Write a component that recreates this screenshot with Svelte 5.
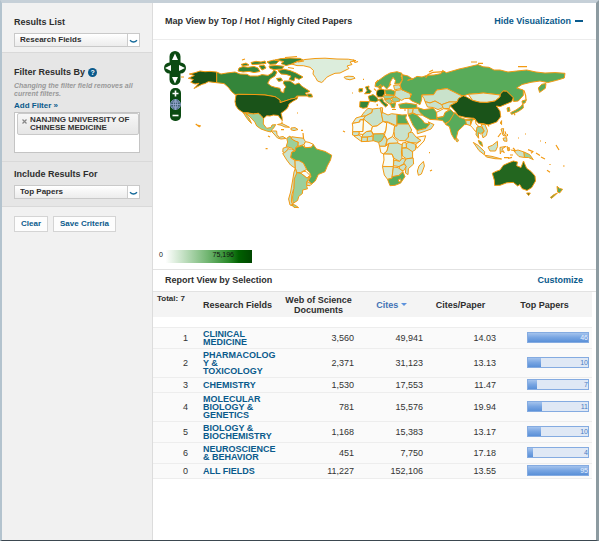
<script>
  const rows = [
    { n: 1, name: 'CLINICAL MEDICINE', docs: '3,560', cites: '49,941', cpp: '14.03', top: 46, fill: 100 },
    { n: 2, name: 'PHARMACOLOGY & TOXICOLOGY', docs: '2,371', cites: '31,123', cpp: '13.13', top: 10, fill: 21 },
    { n: 3, name: 'CHEMISTRY', docs: '1,530', cites: '17,553', cpp: '11.47', top: 7, fill: 15 },
    { n: 4, name: 'MOLECULAR BIOLOGY & GENETICS', docs: '781', cites: '15,576', cpp: '19.94', top: 11, fill: 24 },
    { n: 5, name: 'BIOLOGY & BIOCHEMISTRY', docs: '1,168', cites: '15,383', cpp: '13.17', top: 10, fill: 21 },
    { n: 6, name: 'NEUROSCIENCE & BEHAVIOR', docs: '451', cites: '7,750', cpp: '17.18', top: 4, fill: 9 },
    { n: 0, name: 'ALL FIELDS', docs: '11,227', cites: '152,106', cpp: '13.55', top: 95, fill: 100 }
  ];

  const C = {
    darkest: '#1a5319', dark: '#23661f', deep: '#34853a', green: '#58ab5a',
    mid: '#9bcf9b', light: '#c9e2cb', pale: '#dceddc', white: '#f8fcf6'
  };

  const land = [
    // North America
    [C.darkest, 'M216.7 72 210 71.4 205 71.7 200 71 195 72.7 189.3 74 194.3 75.5 188.3 78.3 193.3 79.5 190.7 82.2 195 84 199 83.3 194 88.5 202 84.3 205 83.5 208.3 81.7 216.7 82.7Z'],
    [C.deep, 'M216.7 72 221 74 226.7 73 235 72 240 74 247 74.3 250 76 258 76 262 74.6 268 75.4 272 73 274 70 277 72 275 76 270 79 267.7 83.3 271 86 275 87.3 280 88.3 281 91.7 283.7 92.7 284.2 89 286 87 283.3 83.3 284 81 290 81 295 84.5 299 83 301.5 86 305 88.3 310 91.4 305 93.3 309 96 302 96 296.7 96 295 98.3 291 99 285 101 280 102.7 280 100 275 96.7 265 95 255 94.5 238.3 94.3 235 94.5 231.7 91.7 228.3 87.3 224 83.6 216.7 82.7Z'],
    [C.darkest, 'M236 95 238.3 94.4 255 94.5 265 95 275 96.7 280 100 280 102.7 285 101 291 99 295 98.3 298 96.4 297 99 293.3 101 289 104 288 107 286.7 109 281 113.3 282 117 282.3 120.7 280 118 278.3 115.5 273.3 115 270 116 266.7 115.7 263.5 118.6 261 115.6 258.3 113.3 253.3 114 248 112.8 243.3 112.7 238.3 109.3 236 106 235 101.7Z'],
    [C.mid, 'M246 113 253.3 114 258.3 113.3 261 115.6 263.5 118.6 263.3 124 266.7 128.3 271 127.5 272 125 275.7 124.6 274 127.7 272 129.5 271 132 266.7 131 261 129 256.7 126 254.8 122 251 118Z'],
    [C.mid, 'M243.5 113 246 117 249 121 251.5 123.4 249 118 245.8 113.5Z'],
    [C.light, 'M271 131 276.6 131 277 134.5 279 137.3 283 136.5 286 138.5 281 139 277.5 138 274 134Z'],
    [C.light, 'M277.5 124.5 282 123.5 286 125.5 289.5 127.3 285 127 281 125.2Z'],
    [C.light, 'M291 128 295 127.6 298 129.5 294 130.6 291 129.8Z'],
    [C.deep, 'M239 68 243 66.6 248 67.3 254 66.4 258 68 260 71.5 254 72.6 249 71.4 243 72 238 71Z'],
    [C.deep, 'M241 64.5 246 63 249 65 243 66Z'],
    [C.deep, 'M251 62.5 256 61.3 261 62 265 61 266 63.4 258 64.3 252 64.6Z'],
    [C.deep, 'M259 66 264 65 266 68 262 70Z'],
    [C.deep, 'M267 61.8 274 60 279 61 276 64 270 64.4Z'],
    [C.deep, 'M269 66 276 65.4 284 66.3 282 69 274 69.6 270 68.4Z'],
    [C.deep, 'M278 70.6 284 69.2 290 70.6 296 73 303 77 299 79.4 295 77.5 294 81 289 79.4 291 76 286 74.4 281 74Z'],
    [C.deep, 'M275 60 281 58.6 290 58 300 58.4 303 60 297 61.4 292 64 286 65.6 281 63.5 284 61.5Z'],
    [C.deep, 'M276.5 78.5 281 78 282.5 80.5 278.6 81.4Z'],
    [C.deep, 'M307 94 311.5 94 312.5 97 308.4 97Z'],
    [C.pale, 'M291.7 64 298 61.5 305 59.5 315 58.5 325 58.2 337 59 348.3 59.2 356 60.6 350 62 352 64.5 347 66 349 68.5 344 71 340 73 335 73.3 330 75.5 326.7 77.3 324 80.5 321.7 82.5 317.5 81 315.5 77.5 313 74 313.5 70.5 310 67.3 303.3 65.7 297 65.6Z'],
    [C.pale, 'M344 77.2 348 76.2 353.5 76.5 355 78.3 350 79.8 345.6 78.9Z'],
    // South America
    [C.mid, 'M286.7 138.3 290 136 291.6 139 296 141.4 298.3 142 298 146 296 147 295.2 151 291.5 148 286.2 146.6 287.6 142Z'],
    [C.light, 'M291.7 136.7 297 137.5 303.3 138.2 305.5 141.7 304 144.5 299.3 146 298 146 298.3 142 296 141.4 291.6 139Z'],
    [C.white, 'M305.5 141.7 309 142.4 313.3 144.3 311.5 147.3 305 147.7 304 144.5Z'],
    [C.green, 'M300 146.3 302.5 145.6 305 147.7 311.5 147.3 313.3 144.6 316.5 149 325 151.4 331.7 155.2 330.5 160 327.3 166 325 171.7 318.3 174.5 315.3 181 311.7 184 308.3 180.5 311 176.5 309.8 172.8 306.7 169.5 303.3 163 297 161 290.5 157.5 291.7 152 295 151 296 147.5Z'],
    [C.light, 'M283 148.3 286.5 147 288.5 149 284.8 152.5 282.8 152Z'],
    [C.light, 'M284.8 152.5 288.5 149 291.5 149 294.8 151 291.7 152 290.5 157.5 295 160.6 295.3 168.3 290.5 165 286.7 160 282.7 153.5Z'],
    [C.light, 'M295 160.6 299 160.6 303.3 163 306.7 169.5 302.7 171.4 300.7 172.5 297 172.6 295.3 168.3Z'],
    [C.white, 'M302.7 171.4 306 171.4 309.8 175.2 307 178.2 301.4 173.6Z'],
    [C.mid, 'M297 172.6 301.4 173.6 307 178.2 310.2 176.2 307 181.5 306.5 185.5 307.5 188.8 302.7 190 302.4 193.6 298.8 196.3 297.6 200.5 293 203.4 292.6 197 293.8 188.3 294 178.3Z'],
    [C.light, 'M307 181.5 311.7 184 310 185.7 306.8 185.4Z'],
    [C.light, 'M295.3 168.5 296.8 173 294.2 179 293.8 188.3 291.8 195 291.4 202 294 206.2 290 205 288.6 199 290.6 192 292.7 180 294 172Z'],
    [C.mid, 'M291.6 204.3 295 205 298.6 207.6 294 207.4Z'],
    // Africa
    [C.light, 'M368 108.4 372.5 109 372 112.5 365.5 116 361 116.5 364.3 112Z'],
    [C.pale, 'M361 116.5 365.5 116 365 119 360 119.8 359.8 122 352.3 123.5 356 118Z'],
    [C.light, 'M372.5 109 378.3 108.3 380.5 108.3 381.6 114 383 121.5 377 126 372.5 126.5 363.5 119 365.5 116 372 112.5Z'],
    [C.pale, 'M380.5 107.6 382.6 107.8 382.4 112.4 381.6 114Z'],
    [C.light, 'M382.4 112.4 388 115 391.5 113.7 397 114.3 397 126 388 122 383 121.5 381.6 114.5Z'],
    [C.green, 'M397 114.3 402 115 406.7 114.7 405.6 118 408.6 124 397 124Z'],
    [C.white, 'M352.3 123.5 359.8 122 360 119.8 363.5 120 363 131.5 352.6 131.8 352.8 127Z'],
    [C.white, 'M363.5 119 372.5 126.5 371.3 130.8 366.5 131.5 363 134.5 359 134 359 131.6 363 131.5Z'],
    [C.white, 'M377 126 383 121.5 386.8 123 386 130 383.5 133.8 373.5 134 371.3 130.8 372.5 126.5Z'],
    [C.white, 'M386.8 122 394.6 125.8 394 131.4 392.6 136.6 387.4 139.6 384.4 135 386 130Z'],
    [C.light, 'M397 124 408.6 124 411.7 130 408.5 135.6 408.4 139 405 140.8 399.5 140.6 394.6 137 394 131.4 394.6 126.2 397 126Z'],
    [C.light, 'M352.6 131.8 359 131.6 359 134 357 136.4 352.5 135Z'],
    [C.pale, 'M354 136 359 135 361.8 137 361.5 141.6 358 139Z'],
    [C.light, 'M361.8 137 367.5 137 367.3 141.4 361.5 141.6Z'],
    [C.light, 'M363 134.5 366.5 131.6 371.3 131.2 373 134.6 370.6 136.8 361.8 137Z'],
    [C.light, 'M367.5 137 373 136 373 140.8 367.3 141.5Z'],
    [C.mid, 'M373.5 134 383.5 133.8 384.4 136 381.4 141 378.6 142.4 373 140.6Z'],
    [C.light, 'M384.4 136 387 140 385.4 146.3 379.6 146.3 378.6 142.4 381.4 141Z'],
    [C.pale, 'M387.4 139.6 392.6 136.6 398 141.4 397.5 143.4 389 143.4 386 145Z'],
    [C.white, 'M379.6 146.3 385.4 146.3 388.5 144 387 151 383.6 154 380.8 152.5Z'],
    [C.light, 'M389 143.4 397.5 143 402.4 145 401.4 152 402 158.4 399.6 161.4 394 158.3 392 154.2 383.6 154 387 151Z'],
    [C.white, 'M383.6 154 392 154.2 393.5 158.3 393.4 166.6 382.5 166.4 384 160Z'],
    [C.light, 'M408.4 133 412 132 416 137 421 140.4 416.6 143 410 142.4 405 140.8 408.4 137Z'],
    [C.white, 'M416.7 137.3 425.7 135.8 424 141 417 148.3 415.7 144.3 421 140.4Z'],
    [C.light, 'M409 142.2 415.7 144.3 415.6 149.6 412 151.8 406.6 148 406 143.6Z'],
    [C.pale, 'M402.4 143 406 142.4 406.4 147.4 402 148.2Z'],
    [C.light, 'M402 148.2 407 148 412.6 151.8 412.6 158 406.4 158.8 402.4 156Z'],
    [C.light, 'M394 160 399.6 161.4 402 158.4 405.6 159 404.6 163.3 399 166.6 393.4 165.6Z'],
    [C.light, 'M406.4 158.8 413.2 158 413.6 164 408.4 168.6 408 174.6 405.4 173 406 166 403.7 163Z'],
    [C.light, 'M399 166.6 404.4 164 406 166.6 403.6 170.8 400.2 169.8Z'],
    [C.pale, 'M382.5 166.6 393.4 166.6 392 178.2 387.6 179.4 384.3 175Z'],
    [C.light, 'M393.4 167 398 167.6 403 171.4 399 175.4 392 177Z'],
    [C.green, 'M387.6 179.4 392 178.2 392.4 176.6 399 175.4 403 172 405 176.6 400.5 183.2 395 185.3 390 185.7Z'],
    [C.white, 'M398.2 180 400.4 178.8 401 181 399.2 182Z'],
    [C.pale, 'M423.4 161.4 424.4 166 421.4 174 418.4 175.3 417.4 171 419 166Z'],
    // Europe
    [C.green, 'M375 86.5 375.7 82.3 380 79.4 385 75.7 390 73 397 71.7 402 73.3 401 76 402.3 80 399.3 83.8 394.7 84 395.5 80.5 393 77.3 390.3 82 389.4 86 386.7 89 383.6 85.8 380 87.4Z'],
    [C.deep, 'M365.4 87 369 86 368.6 89 371.4 91 370 93.4 364.6 93.8 367 90.6Z'],
    [C.deep, 'M359 88.8 362.6 88.5 362.4 91.6 359 92Z'],
    [C.deep, 'M368.3 96.3 373 94.6 376.6 97 378.6 100.5 375.5 102 369.6 101Z'],
    [C.deep, 'M360 101.4 369.4 101.5 367 107.6 363 108.3 359.6 107Z'],
    [C.darkest, 'M377 90.4 381 89 384.6 90 384.6 94 382.7 97 377.7 97 376.4 94Z'],
    [C.green, 'M378.8 86 381 84.6 381.3 88.6 379 88.6Z'],
    [C.green, 'M384.6 90 391 89.7 395.4 91.4 394.4 95.2 386 94.5Z'],
    [C.deep, 'M378.4 99.4 382.6 98.6 383.6 101.6 388 105 385.6 107 380.5 102Z'],
    [C.mid, 'M383 95.2 394 95.5 393.5 98.5 384.5 98.8Z'],
    [C.mid, 'M384.5 99.6 390 98.6 392.6 102 389.6 104 386 101.6Z'],
    [C.mid, 'M391.5 97.6 398.6 96.6 400 101 393.5 102.3Z'],
    [C.green, 'M390.3 103.6 395.6 102.8 394.6 108 391.6 107.4Z'],
    [C.light, 'M393.6 85.4 399.5 84.8 401 88.5 394.6 89.8Z'],
    [C.light, 'M395.4 90.6 401.5 89.6 410 93.4 411 98.2 404.6 98.6 401.6 100.4 394.6 96Z'],
    // Russia and Asia
    [C.green, 'M402 74.6 408 76 412.6 79 407.6 80.3 413.3 78.5 417 76.4 422 77 426.7 75.4 434 75 441 73.6 442.6 70.4 446.4 72.7 453 70.8 459 69 465 67.7 472 66 478 64.6 483 66.8 489 67.3 494 70 500 70 508 72 516.7 71 526.7 70 536 72 545 73 555 72.6 565 73.3 564.3 78 556.7 80.3 547.7 82.6 540 81 531 82.3 522 84.5 516.7 88 523.3 90 523.3 95.4 518.3 101 513.6 101.5 513.3 97.7 506.7 91.3 503 91 500 95 492 94 483.3 93 478 93.6 468.3 94.3 463 96 458 94 453.3 91.7 447 88.6 436.7 90 433.6 94.7 421.7 95 421.7 99.6 420 104.6 412 101 409.4 99 411.6 94 401.7 89.7 400 85 402.4 80Z'],
    [C.green, 'M546 83.5 545.4 88.3 539.6 92.4 538.3 88 541.7 84.3Z'],
    [C.light, 'M421.7 95 433.6 94.7 436.7 90 447 88.6 453.3 91.7 460 95 463 96 458.6 98.4 457 102 449 102 441.7 104.7 435 101 430 103 425 101.6 424 98.6Z'],
    [C.light, 'M425 101.6 430 103 435 101 441.7 104.7 445.6 106.6 438 109.6 433.3 107.5 427.5 107Z'],
    [C.light, 'M441.7 104.7 449 102 457 102 450 105.6 449.6 108.4 443.6 108.7Z'],
    [C.pale, 'M468.3 94.3 478 93.6 483.3 93 492 94 500 95 500 97 495 101 487 102.4 480 102.3 472.6 100.4Z'],
    [C.darkest, 'M450 105.6 457 102 458.6 98.4 463.3 95.7 466.6 97 472.6 100.4 480 102.3 487 102.4 495 101 500 97 500.4 94 503.3 91 506.7 91.3 513.3 97.7 511.7 101.7 505 104.5 500 106.7 496.4 106 500 111 500.7 116.7 496.7 122 488.3 125 483 123.6 478.3 123.3 474 118.3 466 117.6 458.3 115.7 454.6 110.6Z'],
    [C.green, 'M398.7 104.4 406 103 416.7 104.6 417 108 408 108.5 400 108.3Z'],
    [C.light, 'M408 108.6 413.4 108.4 412.5 112.6 408 114.4Z'],
    [C.light, 'M413.4 108.4 418 108.4 422.6 115.3 416.7 114.6 412.5 112.6Z'],
    [C.green, 'M417.7 107.6 424 109.6 433.3 108.3 436.6 112.3 437 119.8 430 119.4 423.6 116 419.5 112Z'],
    [C.green, 'M408.3 115 412.5 113.3 416.7 115 422.4 120 424.4 123 429.8 124 426 128.4 417 130.6 413 125.3Z'],
    [C.light, 'M417 130.6 426 128.4 429.8 124 428 121.8 434 124.6 431 129 424 131.6 417.4 133.8Z'],
    [C.white, 'M436.6 112.3 443.6 108.7 449.6 109.4 445 112.6 443.6 116.6 437 117.6Z'],
    [C.green, 'M437 119.8 437.6 117.6 443.6 116.6 445 112.6 450.6 109.6 454.6 113.6 449.3 121.3 445 123.6 442.6 120.5Z'],
    [C.green, 'M449.3 121.3 454.6 112.6 459.6 117.3 466 119.5 474 118.4 470.6 124.3 464.6 124.6 458 131 456 139 454.6 139.6 451.4 134 449.4 126.6 445.5 124.5Z'],
    [C.light, 'M465.6 120.3 470.6 120.5 470.4 125.6 466.4 124.3Z'],
    [C.mid, 'M456.4 138 458.6 140 457.6 141.8 456 141Z'],
    [C.white, 'M472.4 120 475.4 119.3 476 124 478.6 126 475.6 131.6 472.4 127.6 470.4 125.6Z'],
    [C.mid, 'M477 127 481 126.4 484.3 131 480.5 134 478.4 132.5 478.6 138.3 476 134.6Z'],
    [C.light, 'M481 124.6 485 124.5 487.5 130.6 486.4 135.4 483 137.8 482 134.4 484.3 131Z'],
    [C.green, 'M478.3 140.3 481.6 142 482.6 146.4 479.5 144Z'],
    [C.light, 'M473.3 142.4 478 145.3 484.7 151.7 484.4 154.8 479 150.6Z'],
    [C.light, 'M485 155.3 492 156.4 501.6 159 495 158.7 486.4 157Z'],
    [C.light, 'M488 147 492.4 145.3 497.4 141.3 497.6 146.5 495.5 151 490 151Z'],
    [C.light, 'M500 147.4 506 146.4 502 149 504.4 152.6 501.4 151 500.3 154Z'],
    [C.light, 'M507 146.3 510 149.6 508 151Z'],
    [C.light, 'M514 151 518 150 524 152 524.5 157.5 519 156.6 516 153.4Z'],
    [C.mid, 'M524 152 529.6 154.6 533.3 159.6 528.4 157.5 524.5 157.5Z'],
    [C.light, 'M501 129 503.6 128.5 503.3 133 506.6 136.4 503 135.3Z'],
    [C.light, 'M503 138.3 506.6 137.6 507 141.3 504 141Z'],
    [C.green, 'M500.3 123 501.6 120.6 501.6 124.6Z'],
    [C.green, 'M507 108 509.4 107.3 510 111 507.6 111.6Z'],
    [C.green, 'M510.6 112.7 516 110 521 106.4 523 103.6 523.3 108 518.6 111.3 511.6 114.4Z'],
    [C.green, 'M522 101 526.5 99.6 525 103 522.4 103.4Z'],
    // Oceania
    [C.dark, 'M492.3 173.3 496 171.4 500 170 503.3 165.3 508.3 163 513.3 161 517.5 162 516.7 165.7 521 167.5 523.5 161 525 164.6 526.7 168.3 531 171.4 535 176 535.5 181 531.7 187.6 527 190.5 522 188.6 519.8 184.6 517.7 186 513.3 182.4 506.7 182.8 500 185.3 494.6 185.4 494.4 180.4Z'],
    [C.dark, 'M526.6 193 530.3 193 528.6 195.6Z'],
    [C.green, 'M557 186.3 559.6 188.4 562.6 189.3 559.6 193 557.6 192Z'],
    [C.green, 'M557.4 193 554.6 195.8 551.3 198.4 550.4 197.3 554 194.6Z']
  ];

  // Archipelagos and coast fragments too small to carry a fill
  const specks = 'M181 77h3M197 125l4 1M195.7 124l4 3M242 60l3-1M285 57.5l12-1M298 62l6-1M288 67.5l6 1M353 59.5l2 3 3-1M301 130.3h2M303 133l.6 6M281 129.6h3M282 121.5v2M268 136l2 1M343 131l2 1M265.6 148.6h2M297 113h1M425.6 78 428 74.6 433 72.3 444 71.6M429 72l4-2M471 62h6M478 63.4h5M518 66.6h9M524 90.4l1.6 5 .4 4M514 113.3l1 2M363 79.4h1M352 93h1M377 104l.5 2M392 109.5h4M404 110h2M429 152.6h1M430 171l2-1M488 124.6l1 2M511 150l5 1M504 157.6h5M508 158.3l4-1M510 155h3M528 149.6l5 2-2 1.6M536 153l4 2.4M541 157l4 2M547 170.3l3 2M550 164v1M563 166h1.6M556 145l3 5M525 134h1M518 138h1M540 141h1M545 142.6h1M501 133l-3 4M505 131.4l1 3M507.4 134v2M509 147v4M513 148l2 2M378 80l-2 3M391 84l-2 2M374 88.6l2 2';
</script>

<div class="page">
  <aside class="sidebar">
    <section class="block first">
      <label class="heading" for="list">Results List</label>
      <div class="select">
        <select id="list"><option>Research Fields</option><option>Authors</option><option>Institutions</option></select>
        <svg width="9" height="5" viewBox="0 0 9 5" aria-hidden="true"><path d="M1 1.2Q4.500 4.800 8 1.200" /></svg>
      </div>
    </section>

    <section class="block shaded filter">
      <h2 class="heading">Filter Results By
        <button class="help" aria-label="Help">?</button>
      </h2>
      <p class="hint">Changing the filter field removes all current filters.</p>
      <a class="add" href="#filter">Add Filter »</a>
      <div class="tags">
        <div class="tag">
          <button class="remove" aria-label="Remove filter"><svg width="5" height="5" viewBox="0 0 5 5"><path d="M.5.500 4.500 4.500M4.500.500.500 4.500" /></svg></button>
          <span>NANJING UNIVERSITY OF CHINESE MEDICINE</span>
        </div>
      </div>
    </section>

    <section class="block shaded include">
      <label class="heading" for="include">Include Results For</label>
      <div class="select">
        <select id="include"><option>Top Papers</option><option>Hot Papers</option><option>Highly Cited Papers</option></select>
        <svg width="9" height="5" viewBox="0 0 9 5" aria-hidden="true"><path d="M1 1.2Q4.500 4.800 8 1.200" /></svg>
      </div>
    </section>

    <div class="actions">
      <button class="action">Clear</button>
      <button class="action">Save Criteria</button>
    </div>
  </aside>

  <main>
    <header class="bar map-bar">
      <h1>Map View by Top / Hot / Highly Cited Papers</h1>
      <a href="#map">Hide Visualization <i class="minus"></i></a>
    </header>

    <section class="map" id="map">
      <svg class="world" viewBox="153 40 443 206" role="img" aria-label="World map of papers by country">
        <g stroke="#f39a12" stroke-width="1" stroke-linejoin="round">
          {#each land as [fill, d]}
            <path {fill} {d} />
          {/each}
          <path d={specks} fill="none" stroke-width="1.2" />
        </g>
      </svg>

      <div class="controls">
        <div class="pan">
          <svg class="back" viewBox="0 0 22 34" aria-hidden="true"><path d="M11 0a5.500 5.500 0 0 1 5.500 5.500V11.500a5.500 5.500 0 0 1 0 11V28.500a5.500 5.500 0 0 1-11 0V22.500a5.500 5.500 0 0 1 0-11V5.500A5.500 5.500 0 0 1 11 0Z" fill="#0b4a12" /></svg>
          <button class="up" aria-label="Pan up"><svg viewBox="0 0 8 8"><path d="M4 .5 7 7H1Z" /></svg></button>
          <button class="left" aria-label="Pan left"><svg viewBox="0 0 8 8"><path d="M1 4 7 1V7Z" /></svg></button>
          <button class="right" aria-label="Pan right"><svg viewBox="0 0 8 8"><path d="M7 4 1 1V7Z" /></svg></button>
          <button class="down" aria-label="Pan down"><svg viewBox="0 0 8 8"><path d="M4 7.500 7 1H1Z" /></svg></button>
        </div>
        <div class="zoom">
          <button aria-label="Zoom in"><svg viewBox="0 0 11 11"><path d="M4.700 2.500h1.600v2.200h2.200v1.600H6.300v2.200H4.700V6.300H2.500V4.700h2.200Z" /></svg></button>
          <button aria-label="Zoom to world"><svg viewBox="0 0 11 11"><circle cx="5.500" cy="5.500" r="5" fill="#3e6272" stroke="#8da0cf" stroke-width=".8" /><path d="M.5 5.500h10M5.500.500v10M1.500 3h8M1.500 8h8M5.500.500Q1.200 5.500 5.500 10.500M5.500.500Q9.800 5.500 5.500 10.500" fill="none" stroke="#a3b0dc" stroke-width=".7" /></svg></button>
          <button aria-label="Zoom out"><svg viewBox="0 0 11 11"><path d="M2.500 4.700h6v1.600h-6Z" /></svg></button>
        </div>
      </div>

      <div class="legend"><span>0</span><span>75,196</span></div>
    </section>

    <header class="bar report-bar">
      <h2>Report View by Selection</h2>
      <a href="#customize">Customize</a>
    </header>

    <table>
      <colgroup><col class="c1" /><col class="c2" /><col class="c3" /><col class="c4" /><col class="c5" /><col /></colgroup>
      <thead>
        <tr>
          <th class="total">Total: 7</th>
          <th class="field">Research Fields</th>
          <th>Web of Science Documents</th>
          <th class="sorted">Cites <i class="caret"></i></th>
          <th>Cites/Paper</th>
          <th class="top">Top Papers</th>
        </tr>
      </thead>
      <tbody>
        <tr class="gap"><td colspan="6"></td></tr>
        {#each rows as r}
          <tr>
            <td class="num">{r.n}</td>
            <td class="name"><a href="#field">{r.name}</a></td>
            <td class="docs">{r.docs}</td>
            <td>{r.cites}</td>
            <td>{r.cpp}</td>
            <td class="bar-cell">
              <div class="meter" class:full={r.fill === 100}>
                <div class="fill" style="width:{r.fill}%"></div>
                <span>{r.top}</span>
              </div>
            </td>
          </tr>
        {/each}
      </tbody>
    </table>
  </main>
</div>

<style>
  :global(body) { background: #fff; }
  * { box-sizing: border-box; }
  .page {
    display: flex;
    min-height: 100vh;
    border-style: solid;
    border-width: 3px 3px 1px 2px;
    border-color: #c6d0d8 #8d9ba1 #3b4750 #b3c3ce;
    font: 9px/11px "Liberation Sans", Arial, sans-serif;
    color: #333;
  }
  h1, h2, p { margin: 0; font-size: inherit; }
  a { color: #0a5a8c; font-weight: bold; text-decoration: none; }
  button { font: inherit; padding: 0; border: 0; background: none; cursor: pointer; }

  .sidebar { flex: 0 0 151px; background: #f1f1f1; border-right: 1px solid #dcdcdc; }
  .block { padding: 0 12px; border-bottom: 1px solid #d9d9d9; }
  .first { padding-top: 14px; padding-bottom: 5px; }
  .shaded { background: #e6e6e6; }
  .filter { padding-top: 13px; padding-bottom: 8px; }
  .include { padding-top: 7px; padding-bottom: 7px; }
  .heading { display: block; line-height: 11px; font-weight: bold; color: #2e2e2e; }
  .select { position: relative; margin-top: 5px; }
  .select select {
    display: block;
    appearance: none;
    width: 100%;
    height: 14px;
    padding: 0 16px 0 5px;
    border: 1px solid #c9c9c9;
    border-radius: 0;
    background: linear-gradient(90deg, transparent calc(100% - 12px), #ccc calc(100% - 12px), #ccc calc(100% - 11px), #fff calc(100% - 11px)), linear-gradient(#fff, #ececec);
    font: bold 8px/12px "Liberation Sans", Arial, sans-serif;
    color: #2e2e2e;
  }
  .select svg { position: absolute; right: 2px; top: 6px; fill: none; stroke: #156a9a; stroke-width: 1.4; pointer-events: none; }
  h2.heading { display: flex; align-items: center; gap: 3px; height: 12px; }
  .help { width: 9px; height: 9px; border-radius: 50%; background: #0a5a8c; color: #fff; font-size: 7px; line-height: 9px; text-align: center; }
  .hint { margin-top: 4px; font-size: 7px; line-height: 8px; font-weight: bold; font-style: italic; color: #999; }
  .add { display: block; margin-top: 3px; font-size: 8px; line-height: 10px; }
  .tags { margin-top: 1px; height: 41px; padding: 0 0 0 2px; border: 1px solid #c4c4c4; background: #fff; }
  .tag { display: flex; align-items: flex-start; gap: 3px; padding: 2px 4px; border: 1px solid #c9c9c9; border-radius: 2px; background: linear-gradient(#f7f7f7, #e6e6e6); font-size: 8px; line-height: 8px; font-weight: bold; }
  .remove { flex: none; height: 8px; line-height: 6px; margin-top: 1px; }
  .remove svg { stroke: #888; stroke-width: 1.2; display: block; }
  .actions { display: flex; gap: 5px; padding: 9px 12px; }
  .action { height: 16px; padding: 0 6px; border: 1px solid #d4d4d4; background: #fdfdfd; color: #0a5a8c; font-size: 8px; line-height: 14px; font-weight: bold; }

  main { flex: 1; min-width: 0; background: #fff; }
  .bar { display: flex; align-items: center; justify-content: space-between; padding: 0 13px 0 12px; color: #2e2e2e; }
  .map-bar { height: 37px; border-bottom: 1px solid #ececec; }
  .map-bar a { display: flex; align-items: center; gap: 4px; }
  .minus { width: 8px; height: 2px; background: #0a5a8c; }
  .report-bar { height: 23px; border: solid #e2e2e2; border-width: 1px 0; }

  .map { position: relative; padding-bottom: 6px; }
  .world { display: block; width: 100%; height: auto; }
  .controls { position: absolute; left: 11px; top: 11px; width: 22px; }
  .pan { position: relative; display: grid; grid-template-columns: 8px 6px 8px; grid-template-rows: 11px 12px 11px; place-items: center; }
  .back { position: absolute; inset: 0; width: 22px; height: 34px; }
  .pan button { position: relative; width: 8px; height: 8px; }
  .pan button svg, .zoom svg { display: block; fill: #fff; }
  .up { grid-area: 1 / 2; }
  .left { grid-area: 2 / 1; }
  .right { grid-area: 2 / 3; }
  .down { grid-area: 3 / 2; }
  .zoom { display: grid; width: 11px; margin: 3px auto 0; border-radius: 5px; background: #0b4a12; }
  .zoom button { width: 11px; height: 11px; }
  .legend { display: flex; justify-content: space-between; width: 94px; height: 13px; margin: 4px 0 0 5px; padding: 0 18px 0 1px; background: linear-gradient(90deg, #fff 8%, #74b774 52%, #2a8a2a 75%, #006000 86%, #004600); font-size: 7px; line-height: 10px; color: #111; }

  table { width: calc(100% - 4px); table-layout: fixed; border-collapse: collapse; }
  .c1 { width: 50px; }
  .c2 { width: 75px; }
  .c3 { width: 81px; }
  .c4 { width: 65px; }
  .c5 { width: 73px; }
  th { height: 25px; padding: 0 4px; background: #f4f4f4; line-height: 10px; text-align: center; color: #2e2e2e; }
  th.total { padding: 2px 0 0 4px; font-size: 8px; text-align: left; vertical-align: top; white-space: nowrap; }
  th.field { padding: 0; text-align: left; white-space: nowrap; }
  th.sorted { padding: 0; color: #4272b4; }
  .caret { display: inline-block; vertical-align: 2px; border: solid transparent; border-width: 3px 3px 0; border-top-color: #5d92dc; }
  .gap td { height: 10px; padding: 0; background: #fff; }
  td { padding: 1px 1px 1px 0; border-bottom: 1px solid #ededed; background: #fafafa; line-height: 12px; text-align: right; }
  td.num { padding-right: 15px; }
  td.docs { padding-right: 5px; }
  td.name { padding: 2px 0; text-align: left; line-height: 8px; overflow-wrap: break-word; }
  td.bar-cell { padding: 0 3px 0 30px; }
  .meter { position: relative; height: 11px; overflow: hidden; border: 1px solid #84abe1; background: #dfe8f5; text-align: right; font-size: 7px; line-height: 10px; color: #4a7cc4; }
  .fill { height: 100%; background: linear-gradient(#a4c3ed, #78a5e2 50%, #5a90d8); }
  .meter span { position: absolute; right: 0; top: 0; }
  .full { color: #e8f1ff; }
</style>
